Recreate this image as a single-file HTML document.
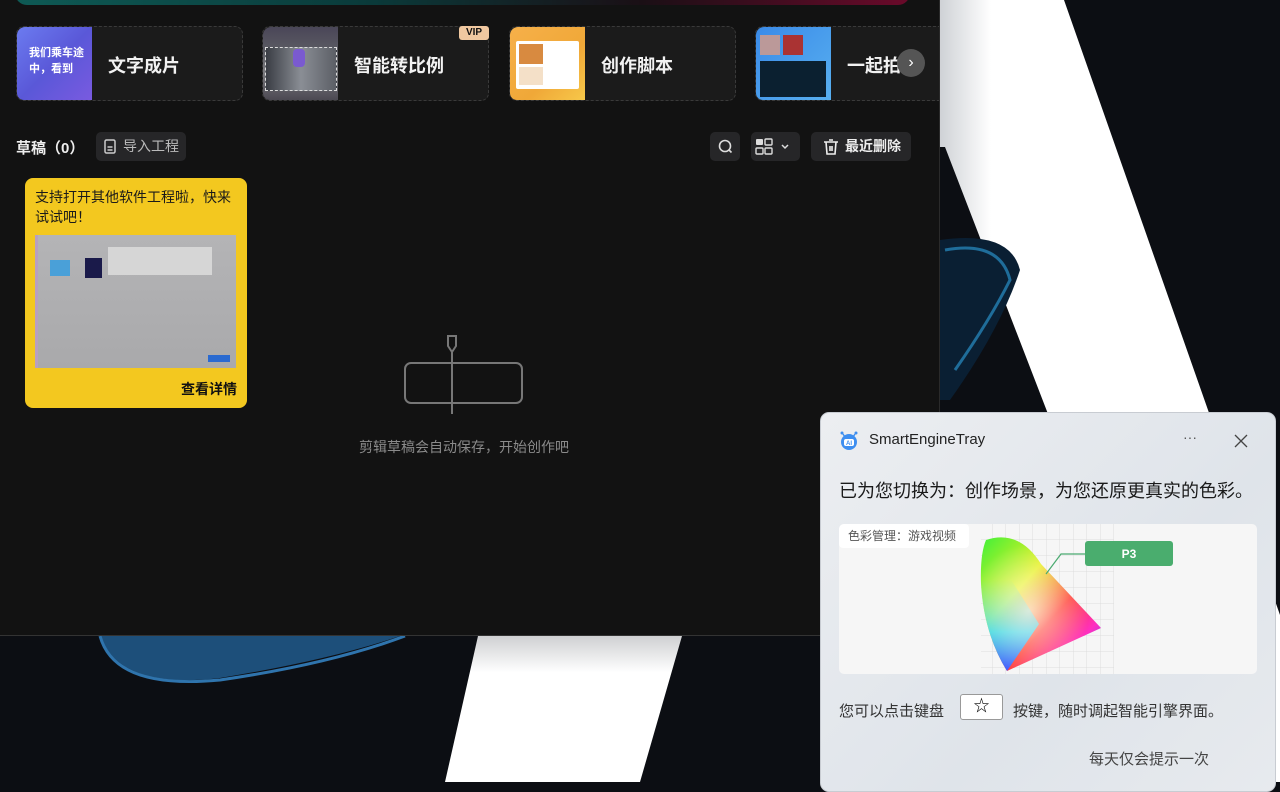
<!DOCTYPE html>
<html><head><meta charset="utf-8"><style>
*{margin:0;padding:0;box-sizing:border-box}
body{width:1280px;height:782px;overflow:hidden;background:#0c0e13;font-family:"Liberation Sans","Noto Sans CJK SC",sans-serif;position:relative}
.abs{position:absolute}
.panel{left:0;top:0;width:940px;height:636px;background:#121212;border-right:1px solid #2a2a2a;border-bottom:1px solid #333;overflow:hidden}
.banner{left:15px;top:-20px;width:895px;height:25px;border-radius:0 0 12px 12px;background:linear-gradient(90deg,#0e5a55,#0a3a3a 40%,#1a0f15 70%,#6a0a2a)}
.card{top:26px;width:227px;height:75px;border:1px dashed #3a3a3a;border-radius:8px;background:#1b1b1b;overflow:hidden}
.thumb{position:absolute;left:0;top:0;width:75px;height:75px;border-radius:8px 0 0 8px}
.ct{position:absolute;left:91px;top:25px;color:#f2f2f2;font-size:18px;font-weight:bold}
.btn{background:#262628;border-radius:5px}
.tray{left:820px;top:412px;width:456px;height:380px;border-radius:9px;background:linear-gradient(135deg,#eceef1,#dfe4ea 60%,#e7eaee);border:1px solid #c8ccd2}
</style></head><body>
<svg class="abs" style="left:0;top:0" width="1280" height="782">
<defs><linearGradient id="wg" x1="0" x2="1"><stop offset="0" stop-color="#cfd2d6"/><stop offset=".15" stop-color="#fff"/></linearGradient>
<linearGradient id="wb" x1="0" y1="0" x2="0" y2="1"><stop offset="0" stop-color="#cfd0d2"/><stop offset=".25" stop-color="#fff"/></linearGradient></defs>
<polygon points="940,0 1064,0 1280,615 1280,782 1190,782 945,147 940,147" fill="url(#wg)"/>
<path d="M940 240 Q1010 230 1020 270 Q1000 330 950 400 L940 400Z" fill="#0a1f33"/>
<path d="M945 250 Q1000 240 1010 280 Q990 320 955 370" stroke="#1f6d9a" stroke-width="3" fill="none"/>
<polygon points="478,636 682,636 640,782 445,782" fill="url(#wb)"/>
<path d="M100 636 Q120 690 220 678 Q330 660 400 636Z" fill="#1d4f7a"/>
<path d="M100 636 Q115 690 220 680 Q330 664 405 636" stroke="#2f74ad" stroke-width="3" fill="none"/>
</svg>
<div class="abs panel">
<div class="abs banner"></div>
<div class="abs card" style="left:16px"><div class="thumb" style="background:linear-gradient(135deg,#6b7bf0,#5a58d8 50%,#7a5ae0)"><div style="position:absolute;left:12px;top:18px;color:#fff;font-size:11px;font-weight:bold;line-height:16px">我们乘车途<br>中，看到</div></div><div class="ct">文字成片</div></div>
<div class="abs card" style="left:262px"><div class="thumb" style="background:linear-gradient(180deg,#4a4658,#5a5a62 30%,#7c7c80 60%,#48454f)"><div style="position:absolute;left:2px;top:20px;width:72px;height:44px;border:1px dashed #ddd;background:linear-gradient(90deg,#3a3d44,#8a8e95 50%,#5c5f66)"></div><div style="position:absolute;left:30px;top:22px;width:12px;height:18px;background:#7a5ad0;border-radius:4px"></div></div><div class="ct">智能转比例</div></div>
<div class="abs" style="left:459px;top:26px;width:30px;height:14px;background:#f0c8a0;border-radius:3px;color:#111;font-size:10px;font-weight:900;text-align:center;line-height:14px">VIP</div>
<div class="abs card" style="left:509px"><div class="thumb" style="background:linear-gradient(135deg,#f6b04a,#f0a838 60%,#f7c94a)"><div style="position:absolute;left:6px;top:14px;width:63px;height:48px;background:#fff;border-radius:2px"><div style="position:absolute;left:3px;top:3px;width:24px;height:20px;background:#d88a40"></div><div style="position:absolute;left:3px;top:26px;width:24px;height:18px;background:#f4e0c8"></div></div></div><div class="ct">创作脚本</div></div>
<div class="abs card" style="left:755px;width:200px"><div class="thumb" style="background:linear-gradient(135deg,#3a8ae8,#58b0f0)"><div style="position:absolute;left:4px;top:8px;width:20px;height:20px;background:#b99"></div><div style="position:absolute;left:27px;top:8px;width:20px;height:20px;background:#a33"></div><div style="position:absolute;left:4px;top:34px;width:66px;height:36px;background:#0b2030"></div></div><div class="ct">一起拍</div></div>
<div class="abs" style="left:897px;top:49px;width:28px;height:28px;border-radius:50%;background:#555;color:#fff;font-size:16px;text-align:center;line-height:27px">›</div>
</div>
<div class="abs" style="left:16px;top:137px;color:#eee;font-size:15px;font-weight:bold">草稿（0）</div>
<div class="abs btn" style="left:96px;top:132px;width:90px;height:29px;color:#bbb;font-size:14px;line-height:29px;padding-left:27px">导入工程<svg class="abs" style="left:8px;top:7px" width="12" height="15"><rect x="1" y="1" width="10" height="13" rx="1.5" fill="none" stroke="#ccc" stroke-width="1.5"/><path d="M3.5 8h5M3.5 11h5" stroke="#ccc" stroke-width="1.5"/></svg></div>
<div class="abs btn" style="left:710px;top:132px;width:30px;height:29px"><svg width="30" height="29"><circle cx="15" cy="14" r="5.5" fill="none" stroke="#ddd" stroke-width="1.6"/><path d="M19 18l2.5 2.5" stroke="#ddd" stroke-width="1.6"/></svg></div>
<div class="abs btn" style="left:751px;top:132px;width:49px;height:29px"><svg width="49" height="29"><rect x="5" y="7" width="7" height="6" rx="1" fill="#ddd"/><rect x="14" y="7" width="7" height="6" rx="1" fill="none" stroke="#ddd" stroke-width="1.4"/><rect x="5" y="16" width="7" height="6" rx="1" fill="none" stroke="#ddd" stroke-width="1.4"/><rect x="14" y="16" width="7" height="6" rx="1" fill="none" stroke="#ddd" stroke-width="1.4"/><path d="M31 13l3 3 3-3" fill="none" stroke="#ddd" stroke-width="1.5"/></svg></div>
<div class="abs btn" style="left:811px;top:132px;width:100px;height:29px;color:#eee;font-size:14px;font-weight:bold;line-height:29px;padding-left:34px">最近删除<svg class="abs" style="left:11px;top:6px" width="18" height="18"><path d="M2 4h14M7 2h4M4 4l1 12h8l1-12M8 8v5M10 8v5" fill="none" stroke="#eee" stroke-width="1.6"/></svg></div>
<div class="abs" style="left:128px;top:170px;width:0;height:0;border:8px solid transparent;border-bottom-color:#f3c81f"></div>
<div class="abs" style="left:25px;top:178px;width:222px;height:230px;background:#f3c81f;border-radius:8px">
<div style="position:absolute;left:10px;top:9px;width:205px;font-size:14px;line-height:20px;color:#1a1a1a">支持打开其他软件工程啦，快来试试吧！</div>
<div style="position:absolute;left:10px;top:57px;width:201px;height:133px;background:linear-gradient(180deg,#b4b4b6,#a9a9ab);border-left:3px solid #b8a0c0">
<div style="position:absolute;left:12px;top:25px;width:20px;height:16px;background:#4aa0d8"></div>
<div style="position:absolute;left:47px;top:23px;width:17px;height:20px;background:#1a1a4a"></div>
<div style="position:absolute;left:70px;top:12px;width:104px;height:28px;background:#d6d6d6"></div>
<div style="position:absolute;left:170px;top:120px;width:22px;height:7px;background:#2a6ad0"></div></div>
<div style="position:absolute;right:10px;top:201px;font-size:14px;font-weight:bold;color:#111">查看详情</div></div>
<svg class="abs" style="left:400px;top:332px" width="130" height="85"><path d="M48 4h8v10l-4 6-4-6z" fill="none" stroke="#777" stroke-width="2"/><line x1="52" y1="20" x2="52" y2="82" stroke="#777" stroke-width="2"/><rect x="5" y="31" width="117" height="40" rx="6" fill="none" stroke="#777" stroke-width="2"/></svg>
<div class="abs" style="left:359px;top:437px;color:#8a8a8a;font-size:14px">剪辑草稿会自动保存，开始创作吧</div>
<div class="abs tray">
<svg class="abs" style="left:17px;top:17px" width="22" height="22"><circle cx="11" cy="12" r="8" fill="#3d8ef0"/><circle cx="4" cy="3" r="1.5" fill="#3d8ef0"/><circle cx="18" cy="3" r="1.5" fill="#3d8ef0"/><path d="M5 4l2 3M17 4l-2 3" stroke="#3d8ef0" stroke-width="1.4"/><rect x="6" y="9" width="10" height="7" rx="2" fill="#fff"/><text x="11" y="15" font-size="6" text-anchor="middle" fill="#3d8ef0" font-weight="bold" font-family="Liberation Sans">AI</text></svg>
<div class="abs" style="left:48px;top:18px;font-size:15px;color:#222">SmartEngineTray</div>
<div class="abs" style="left:362px;top:16px;font-size:14px;color:#555">···</div>
<svg class="abs" style="left:413px;top:21px" width="14" height="14"><path d="M1 1l12 12M13 1L1 13" stroke="#444" stroke-width="1.3"/></svg>
<div class="abs" style="left:18px;top:64px;font-size:18px;color:#1a1a1a">已为您切换为：创作场景，为您还原更真实的色彩。</div>
<div class="abs" style="left:18px;top:111px;width:418px;height:150px;background:#f6f6f6;border-radius:5px;overflow:hidden">
<div class="abs" style="left:0;top:0;width:130px;height:24px;background:#fff;border-radius:4px;font-size:12px;color:#555;line-height:24px;padding-left:9px">色彩管理：游戏视频</div>
<svg class="abs" style="left:140px;top:0" width="280" height="150">
<defs><pattern id="g" width="13.5" height="16" patternUnits="userSpaceOnUse"><path d="M13.5 0V16M0 16H13.5" stroke="#ddd" stroke-width="1" fill="none"/></pattern>
<linearGradient id="c1" x1="0" y1="0" x2="1" y2="1"><stop offset="0" stop-color="#3ef03a"/><stop offset=".35" stop-color="#e8f020"/><stop offset=".6" stop-color="#ff3a30"/><stop offset=".8" stop-color="#ff30c0"/><stop offset="1" stop-color="#5a40ff"/></linearGradient>
<radialGradient id="c2" cx=".4" cy=".55" r=".5"><stop offset="0" stop-color="#fff" stop-opacity=".7"/><stop offset="1" stop-color="#fff" stop-opacity="0"/></radialGradient>
<linearGradient id="c3" x1="0" y1="0" x2="0" y2="1"><stop offset=".3" stop-color="#20e0c0" stop-opacity="0"/><stop offset=".7" stop-color="#20d8f0" stop-opacity=".9"/><stop offset="1" stop-color="#4050ff"/></linearGradient></defs>
<rect x="2" y="0" width="133" height="150" fill="url(#g)"/>
<path d="M7 16 Q40 5 62 40 L122 104 L28 147 Q5 110 2 60 Q1 30 7 16Z" fill="url(#c1)"/>
<path d="M7 16 Q1 30 2 60 Q5 110 28 147 L60 100 Z" fill="url(#c3)"/>
<path d="M7 16 Q40 5 62 40 L122 104 L28 147 Q5 110 2 60 Q1 30 7 16Z" fill="url(#c2)"/>
<path d="M67 50 L82 30 H106" stroke="#4aaa70" stroke-width="1.2" fill="none"/>
<rect x="106" y="17" width="88" height="25" rx="3" fill="#4aad6e"/>
<text x="150" y="34" font-size="12" font-weight="bold" fill="#fff" text-anchor="middle" font-family="Liberation Sans">P3</text></svg></div>
<div class="abs" style="left:18px;top:287px;font-size:15px;color:#333">您可以点击键盘</div>
<div class="abs" style="left:139px;top:281px;width:43px;height:26px;background:#fff;border:1px solid #999;border-radius:3px;text-align:center;font-size:16px;line-height:24px">☆</div>
<div class="abs" style="left:192px;top:287px;font-size:15px;color:#333">按键，随时调起智能引擎界面。</div>
<div class="abs" style="left:268px;top:335px;font-size:15px;color:#444">每天仅会提示一次</div>
</div>
</body></html>
